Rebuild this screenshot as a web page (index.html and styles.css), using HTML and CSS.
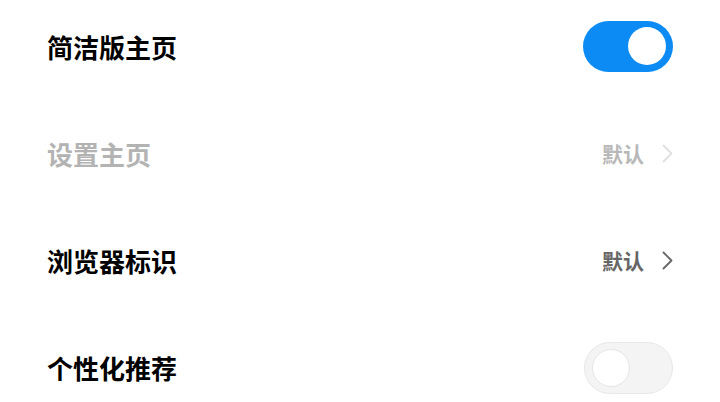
FILE: index.html
```html
<!DOCTYPE html>
<html lang="zh-CN">
<head>
<meta charset="utf-8">
<link rel="stylesheet" href="styles.css">
</head>
<body>
<div class="list">
  <div class="row">
    <span class="title">简洁版主页</span>
    <span class="switch on"><span class="knob"></span></span>
  </div>
  <div class="row disabled">
    <span class="title">设置主页</span>
    <span class="value">默认<svg class="chev" width="11" height="19" viewBox="0 0 11 19"><polyline points="1.5,1.5 9.5,9.5 1.5,17.5" fill="none" stroke="currentColor" stroke-width="1.8" stroke-linecap="round" stroke-linejoin="round"/></svg></span>
  </div>
  <div class="row">
    <span class="title">浏览器标识</span>
    <span class="value">默认<svg class="chev" width="11" height="19" viewBox="0 0 11 19"><polyline points="1.5,1.5 9.5,9.5 1.5,17.5" fill="none" stroke="currentColor" stroke-width="1.8" stroke-linecap="round" stroke-linejoin="round"/></svg></span>
  </div>
  <div class="row">
    <span class="title">个性化推荐</span>
    <span class="switch off"><span class="knob"></span></span>
  </div>
</div>
</body>
</html>
```
FILE: styles.css
```css
html, body {
  margin: 0;
  padding: 0;
  background: #ffffff;
  height: 402px;
  overflow: hidden;
}
body {
  font-family: "Noto Sans CJK SC", "Noto Sans", sans-serif;
}
.list {
  margin-top: -7px;
  padding: 0 47px;
  display: flex;
  flex-direction: column;
}
.row {
  height: 107px;
  display: flex;
  align-items: center;
  justify-content: space-between;
}
.title {
  font-size: 26px;
  font-weight: 700;
  color: #000000;
  line-height: 1;
}
.value {
  display: flex;
  align-items: center;
  font-size: 21px;
  font-weight: 700;
  color: #666666;
  line-height: 1;
}
.chev {
  margin-left: 18px;
  color: #666666;
  display: block;
}
.disabled .title {
  color: #b3b3b3;
}
.disabled .value {
  color: #b8b8b8;
}
.disabled .chev {
  color: #e0e0e0;
}
.switch {
  position: relative;
  display: block;
  width: 90px;
  height: 51px;
  border-radius: 26px;
  box-sizing: border-box;
}
.switch.on {
  background: #0c8bf4;
}
.switch.off {
  background: #f4f4f4;
  border: 1px solid #e8e8e8;
  height: 52px;
  width: 89px;
}
.knob {
  position: absolute;
  top: 6px;
  width: 38px;
  height: 38px;
  border-radius: 50%;
  background: #ffffff;
  box-sizing: border-box;
}
.switch.on .knob {
  right: 7px;
}
.switch.off .knob {
  left: 7px;
  top: 6px;
  border: 1px solid #e6e6e6;
}
```
